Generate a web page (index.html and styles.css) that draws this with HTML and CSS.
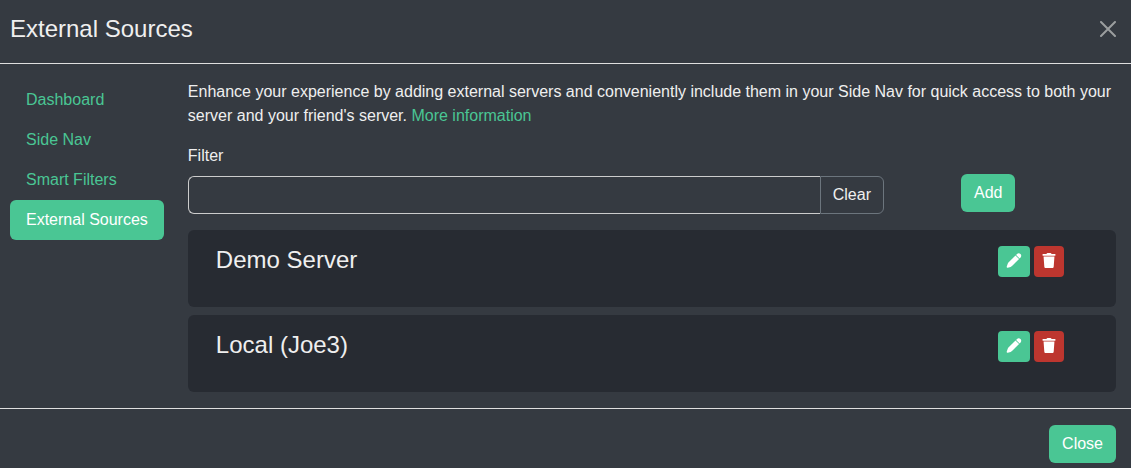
FILE: index.html
```html
<!DOCTYPE html>
<html lang="en">
<head>
<meta charset="utf-8">
<meta name="viewport" content="width=device-width, initial-scale=1">
<title>External Sources</title>
<link rel="stylesheet" href="styles.css">
</head>
<body>
<svg class="sprite" aria-hidden="true">
  <symbol id="icon-pen" viewBox="0 0 16 16"><path fill="currentColor" d="M11 1.200C12.200 0 13.800 0 14.900 1.100S16 3.800 14.800 5L14 5.800 10.200 2zM9.600 2.600 13.400 6.400 6.400 13.400C5.800 14 5.200 14.500 4.400 14.800L1.300 15.800C.6 16 0 15.400.2 14.700L1.200 11.600C1.500 10.800 2 10.200 2.600 9.600z"/></symbol>
  <symbol id="icon-trash" viewBox="0 0 14 16"><path fill="currentColor" d="M4.600.6C4.700.2 5 0 5.400 0H8.600C9 0 9.300.2 9.400.6L9.800 1.100H13.200C14.300 1.100 14.300 3 13.200 3H.8C-.3 3-.3 1.100.8 1.100H4.200zM1.200 3.700H12.800L12 14.700C11.900 15.500 11.400 16 10.600 16H3.400C2.600 16 2.100 15.500 2 14.700z"/></symbol>
</svg>
<div class="modal" role="dialog" aria-labelledby="modal-title">
  <header class="modal-header">
    <h1 class="modal-title" id="modal-title">External Sources</h1>
    <button class="dismiss" type="button" aria-label="Dismiss">
      <svg class="dismiss-icon" viewBox="0 0 16 16"><path d="M1 1 15 15M15 1 1 15" fill="none" stroke="currentColor" stroke-width="2" stroke-linecap="round"/></svg>
    </button>
  </header>
  <div class="modal-body">
    <nav class="side-nav">
      <a class="nav-link" href="#dashboard">Dashboard</a>
      <a class="nav-link" href="#side-nav">Side Nav</a>
      <a class="nav-link" href="#smart-filters">Smart Filters</a>
      <a class="nav-link active" href="#external-sources" aria-current="page">External Sources</a>
    </nav>
    <main class="content">
      <p class="intro">Enhance your experience by adding external servers and conveniently include them in your Side Nav for quick access to both your server and your friend's server. <a class="link" href="#more">More information</a></p>
      <label class="label" for="filter">Filter</label>
      <div class="filter-row">
        <div class="input-group">
          <input class="input" id="filter" type="text">
          <button class="btn btn-outline" type="button">Clear</button>
        </div>
        <button class="btn btn-primary add" type="button">Add</button>
      </div>
      <ul class="sources">
        <li class="card">
          <h2 class="card-title">Demo Server</h2>
          <div class="actions">
            <button class="btn-icon edit" type="button" aria-label="Edit Demo Server"><svg class="icon-edit"><use href="#icon-pen"/></svg></button>
            <button class="btn-icon delete" type="button" aria-label="Delete Demo Server"><svg class="icon-delete"><use href="#icon-trash"/></svg></button>
          </div>
        </li>
        <li class="card">
          <h2 class="card-title">Local (Joe3)</h2>
          <div class="actions">
            <button class="btn-icon edit" type="button" aria-label="Edit Local (Joe3)"><svg class="icon-edit"><use href="#icon-pen"/></svg></button>
            <button class="btn-icon delete" type="button" aria-label="Delete Local (Joe3)"><svg class="icon-delete"><use href="#icon-trash"/></svg></button>
          </div>
        </li>
      </ul>
    </main>
  </div>
  <footer class="modal-footer">
    <button class="btn btn-primary" type="button">Close</button>
  </footer>
</div>
</body>
</html>
```
FILE: styles.css
```css
* {
  box-sizing: border-box;
}

body {
  margin: 0;
  background: #353a41;
  color: #efefef;
  font: 16px/24px "Liberation Sans", Arial, sans-serif;
}

button,
input {
  font: inherit;
  color: inherit;
}

button {
  cursor: pointer;
}

.sprite {
  position: absolute;
  width: 0;
  height: 0;
}

.modal-header {
  display: flex;
  align-items: center;
  justify-content: space-between;
  padding: 11px 15px 16px 10px;
  border-bottom: 1px solid #dfdfdf;
}

.modal-title {
  margin: 0;
  font-size: 24px;
  line-height: 36px;
  font-weight: 400;
}

.dismiss {
  display: flex;
  padding: 0;
  border: 0;
  background: none;
  color: #9b9e9f;
}

.dismiss-icon {
  width: 16px;
  height: 16px;
}

.modal-body {
  display: flex;
  gap: 24px;
  padding: 16px 15px 16px 10px;
}

.side-nav {
  flex: none;
}

.nav-link {
  display: block;
  padding: 8px 16px;
  border-radius: 6px;
  color: #4ac694;
  text-decoration: none;
}

.nav-link.active {
  background: #4ac694;
  color: #fff;
}

.content {
  flex: 1;
  min-width: 0;
}

.intro {
  margin: 0 0 16px;
}

.link {
  color: #4ac694;
  text-decoration: none;
}

.label {
  display: block;
  margin-bottom: 8px;
}

.filter-row {
  display: flex;
  align-items: flex-start;
  margin-bottom: 16px;
}

.input-group {
  display: flex;
  width: 75%;
}

.input {
  flex: 1;
  min-width: 0;
  padding: 6px 12px;
  border: 1px solid #ccc;
  border-right: 0;
  border-radius: 6px 0 0 6px;
  background: transparent;
}

.btn {
  padding: 6px 12px;
  border: 1px solid transparent;
  border-radius: 6px;
}

.btn-outline {
  border-color: #6c757d;
  border-radius: 0 6px 6px 0;
  background: transparent;
}

.btn-primary {
  background: #4ac694;
  color: #fff;
}

.add {
  margin: -2px 0 0 77px;
}

.sources {
  display: grid;
  gap: 8px;
  margin: 0;
  padding: 0;
  list-style: none;
}

.card {
  display: flex;
  align-items: flex-start;
  justify-content: space-between;
  padding: 16px 52px 30px 28px;
  border-radius: 6px;
  background: #272b32;
}

.card-title {
  margin: 0;
  font-size: 24px;
  line-height: 28px;
  font-weight: 400;
}

.actions {
  display: flex;
  gap: 4px;
}

.btn-icon {
  display: flex;
  align-items: center;
  justify-content: center;
  height: 31px;
  padding: 0 8px 2px;
  border: 0;
  border-radius: 4px;
  color: #fff;
}

.edit {
  background: #4ac694;
}

.delete {
  background: #bd362f;
}

.icon-edit {
  width: 16px;
  height: 15px;
}

.icon-delete {
  width: 14px;
  height: 15px;
}

.modal-footer {
  display: flex;
  justify-content: flex-end;
  padding: 16px 15px 5px;
  border-top: 1px solid #dfdfdf;
}
```
